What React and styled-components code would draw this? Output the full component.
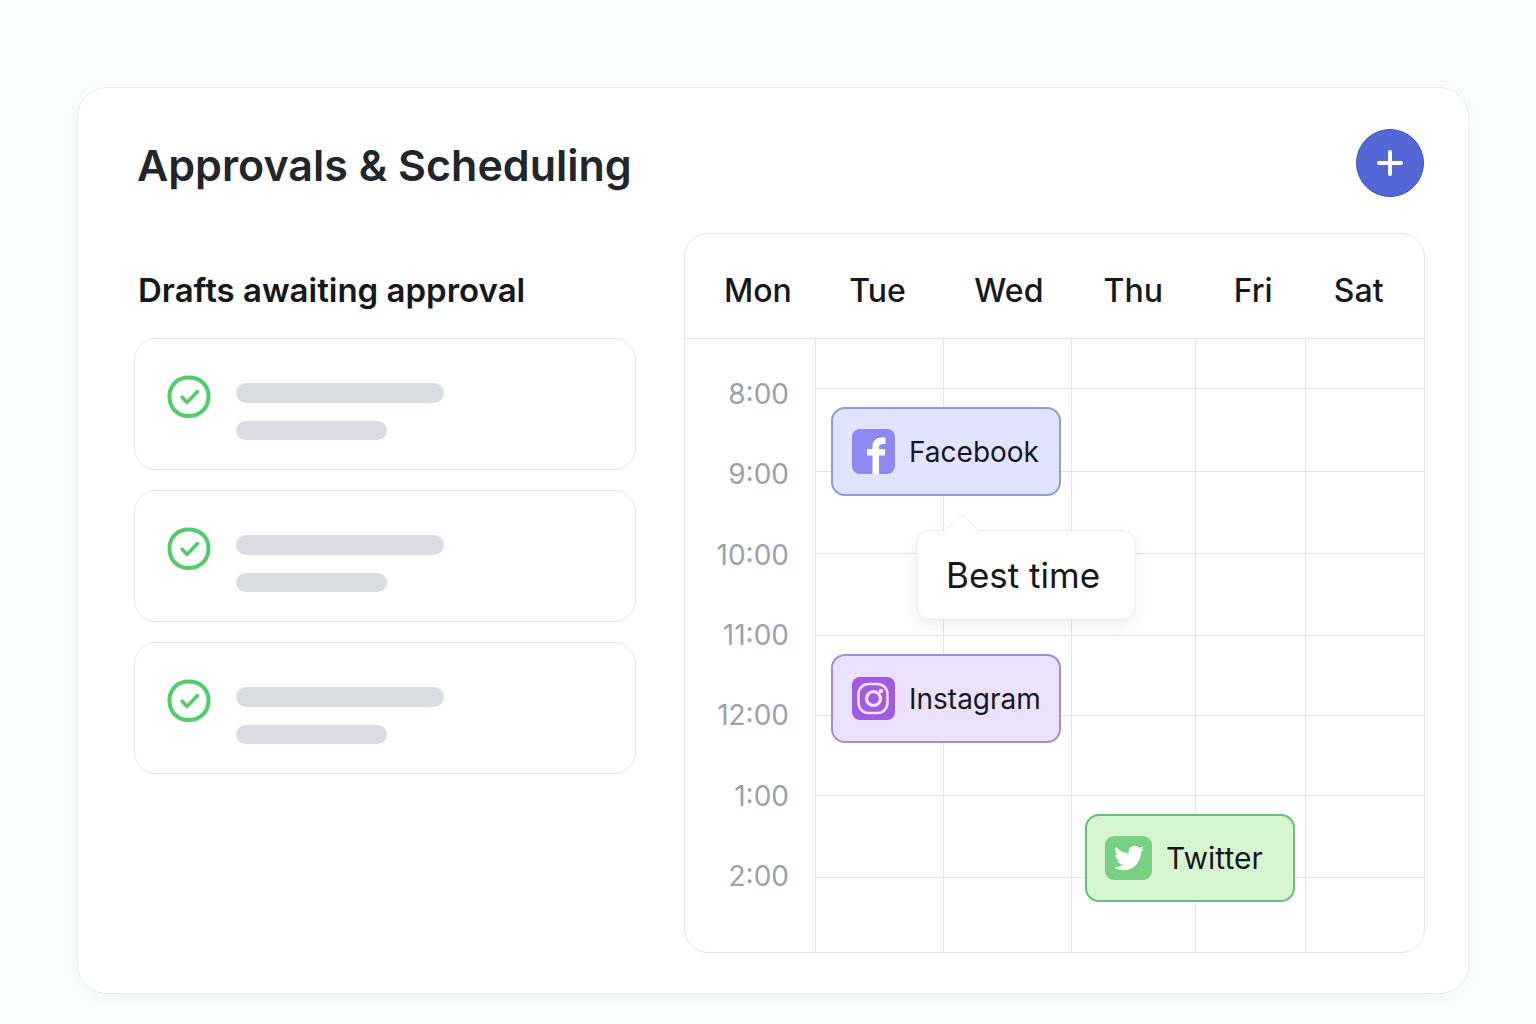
import React from "react";
import styled, { createGlobalStyle } from "styled-components";
import { FaTwitter } from "react-icons/fa";

const line = "#e2e3e6";

const GlobalStyle = createGlobalStyle`
  * {
    box-sizing: border-box;
  }

  body {
    margin: 0;
    background: #fbfdfc;
    color: #16181c;
    font-family: Inter, "Liberation Sans", sans-serif;
  }

  h1, h2, ul, ol {
    margin: 0;
    padding: 0;
  }

  ul, ol {
    list-style: none;
  }
`;

const Page = styled.main`
  min-height: 100vh;
  padding: 87px 67px 31px 77px;
`;

const Panel = styled.section`
  padding: 41px 43px 40px 56px;
  background: #fff;
  border: 1px solid #eceeee;
  border-radius: 30px;
  box-shadow: 0 4px 16px rgba(30, 40, 50, 0.03);
`;

const PanelHeader = styled.header`
  display: flex;
  align-items: center;
  justify-content: space-between;
  margin-bottom: 36px;
  padding: 0 1px 0 3px;
`;

const Title = styled.h1`
  padding-top: 4px;
  color: #22262a;
  font-size: 43px;
  font-weight: 600;
  line-height: 64px;
`;

const AddButton = styled.button`
  display: flex;
  align-items: center;
  justify-content: center;
  width: 68px;
  height: 68px;
  padding: 0;
  border: 1px solid #3f4fc0;
  border-radius: 50%;
  background: #5367d6;
  color: #fff;
  cursor: pointer;
`;

const Columns = styled.div`
  display: grid;
  grid-template-columns: 502fr 741fr;
  gap: 48px;
`;

const DraftsTitle = styled.h2`
  padding: 37px 0 28px 4px;
  font-size: 33px;
  font-weight: 600;
  line-height: 40px;
`;

const DraftList = styled.ul`
  display: flex;
  flex-direction: column;
  gap: 20px;
`;

const Draft = styled.li`
  display: flex;
  gap: 25px;
  height: 132px;
  padding: 36px 32px 28px;
  border: 1px solid ${line};
  border-radius: 22px;
`;

const DraftLines = styled.div`
  display: flex;
  flex-direction: column;
  flex: 1;
  gap: 18px;
  padding-top: 8px;
`;

const DraftLine = styled.div`
  width: ${(props) => (props.$short ? "151px" : "208px")};
  height: ${(props) => (props.$short ? "19px" : "20px")};
  border-radius: 10px;
  background: #d9dce2;
`;

const Calendar = styled.section`
  border: 1px solid ${line};
  border-radius: 24px;
`;

const Days = styled.div`
  display: grid;
  grid-template-columns: 125fr 125fr 129fr 130fr 100fr 90fr;
  padding: 37px 0 27px 39px;
  border-bottom: 1px solid ${line};
  font-size: 32px;
  font-weight: 500;
  line-height: 40px;
`;

const Week = styled.div`
  display: grid;
  grid-template-columns: 131fr 128fr 128fr 124fr 110fr 118fr;
  grid-template-rows: 50px 83px 82px 82px 80px 80px 82px 74px;
`;

const Times = styled.ol`
  grid-column: 1;
  grid-row: 1 / -1;
  display: flex;
  flex-direction: column;
  padding: 15px 26px 36px 0;
  border-right: 1px solid ${line};
  color: #9aa1ad;
  font-size: 28px;
  text-align: right;
`;

const Time = styled.li`
  display: flex;
  flex: 1;
  align-items: center;
  justify-content: flex-end;
`;

const Slot = styled.div`
  grid-column: ${(props) => props.$col};
  grid-row: ${(props) => props.$row};
  border: 0 solid ${line};
  border-right-width: ${(props) => (props.$col === 6 ? 0 : "1px")};
  border-bottom-width: ${(props) => (props.$row === 8 ? 0 : "1px")};
`;

const tones = {
  blue: { fill: "#e1e4fe", edge: "#8d9be0" },
  purple: { fill: "#ebe1fd", edge: "#a58cd6" },
  green: { fill: "#d5f5d1", edge: "#68c07c" },
};

const Event = styled.article`
  position: relative;
  grid-column: ${(props) => props.$col} / span 2;
  grid-row: ${(props) => props.$row} / span 2;
  display: flex;
  align-items: center;
  gap: 14px;
  height: 89px;
  margin: 18px 11px 0 15px;
  padding-left: 19px;
  border: 2px solid ${(props) => tones[props.$tone].edge};
  border-radius: 14px;
  background: ${(props) => tones[props.$tone].fill};
  font-size: 28px;
  line-height: 36px;
`;

const WideEvent = styled(Event)`
  height: 88px;
  margin-left: 13px;
  padding-left: 18px;
  font-size: 30px;
`;

const Badge = styled.span`
  display: flex;
  align-items: center;
  justify-content: center;
  width: 47px;
  height: 44px;
  border-radius: 9px;
  background: #78d183;
  color: #fff;
`;

const Tooltip = styled.div`
  position: absolute;
  top: 121px;
  left: 83px;
  z-index: 1;
  padding: 22px 35px 22px 29px;
  border: 1px solid #e9eaec;
  border-radius: 14px;
  background: #fff;
  box-shadow: 0 6px 14px rgba(30, 40, 50, 0.07);
  font-size: 35px;
  line-height: 44px;
  white-space: nowrap;
`;

const Arrow = styled.svg`
  position: absolute;
  top: -17px;
  left: 26px;
`;

const CheckIcon = () => (
  <svg width="44" height="44" viewBox="0 0 44 44" fill="none">
    <path
      d="M22 2.500C33.500 2.500 41.500 10.500 41.500 21.500S33.500 41 22 41 2.500 33 2.500 21.500 10.500 2.500 22 2.500Z"
      stroke="#50cb69"
      strokeWidth="4"
    />
    <path
      d="M15 22l5 5.500L30.500 16.500"
      stroke="#50cb69"
      strokeWidth="3.500"
      strokeLinecap="round"
      strokeLinejoin="round"
    />
  </svg>
);

const FacebookIcon = () => (
  <svg width="43" height="45" viewBox="0 0 43 45">
    <rect width="43" height="45" rx="8" fill="#8d89f1" />
    <path
      d="M20.500 45V26.500H15V20h5.500v-2C20.500 12 24 8.500 29 8.500h4.500V15h-3c-2.500 0-3.500 1.200-3.500 3.500V20h6v6.500h-6V45Z"
      fill="#fff"
    />
  </svg>
);

const InstagramIcon = () => (
  <svg width="43" height="43" viewBox="0 0 43 43" fill="none">
    <rect width="43" height="43" rx="8" fill="#a25be0" />
    <rect
      x="6.500"
      y="7"
      width="29"
      height="29"
      rx="10"
      stroke="#f3e4ff"
      strokeWidth="2.500"
    />
    <circle cx="21.500" cy="21.500" r="7" stroke="#f3e4ff" strokeWidth="3.200" />
    <circle cx="29" cy="14" r="2.200" fill="#f3e4ff" />
  </svg>
);

const TwitterIcon = () => (
  <Badge>
    <FaTwitter size={30} />
  </Badge>
);

const days = ["Mon", "Tue", "Wed", "Thu", "Fri", "Sat"];
const times = ["8:00", "9:00", "10:00", "11:00", "12:00", "1:00", "2:00"];
const rows = [1, 2, 3, 4, 5, 6, 7, 8];
const cols = [2, 3, 4, 5, 6];

export default () => (
  <Page>
    <GlobalStyle />
    <Panel>
      <PanelHeader>
        <Title>Approvals &amp; Scheduling</Title>
        <AddButton type="button" aria-label="Add">
          <svg width="28" height="28" viewBox="0 0 28 28" fill="none">
            <path
              d="M14 3v22M3 14h22"
              stroke="currentColor"
              strokeWidth="4"
              strokeLinecap="round"
            />
          </svg>
        </AddButton>
      </PanelHeader>
      <Columns>
        <section>
          <DraftsTitle>Drafts awaiting approval</DraftsTitle>
          <DraftList>
            {[1, 2, 3].map((draft) => (
              <Draft key={draft}>
                <CheckIcon />
                <DraftLines>
                  <DraftLine />
                  <DraftLine $short />
                </DraftLines>
              </Draft>
            ))}
          </DraftList>
        </section>
        <Calendar>
          <Days>
            {days.map((day) => (
              <span key={day}>{day}</span>
            ))}
          </Days>
          <Week>
            <Times>
              {times.map((time) => (
                <Time key={time}>{time}</Time>
              ))}
            </Times>
            {rows.map((row) =>
              cols.map((col) => (
                <Slot key={`${row}-${col}`} $row={row} $col={col} />
              ))
            )}
            <Event $tone="blue" $col={2} $row={2}>
              <FacebookIcon />
              <span>Facebook</span>
              <Tooltip role="tooltip">
                <Arrow width="38" height="18" viewBox="0 0 38 18">
                  <path
                    d="M0 17.500L15 4Q19 0 23 4L36 17.500"
                    fill="#fff"
                    stroke="#e9eaec"
                  />
                  <path d="M1 17h35v1H1z" fill="#fff" />
                </Arrow>
                Best time
              </Tooltip>
            </Event>
            <Event $tone="purple" $col={2} $row={5}>
              <InstagramIcon />
              <span>Instagram</span>
            </Event>
            <WideEvent $tone="green" $col={4} $row={7}>
              <TwitterIcon />
              <span>Twitter</span>
            </WideEvent>
          </Week>
        </Calendar>
      </Columns>
    </Panel>
  </Page>
);
